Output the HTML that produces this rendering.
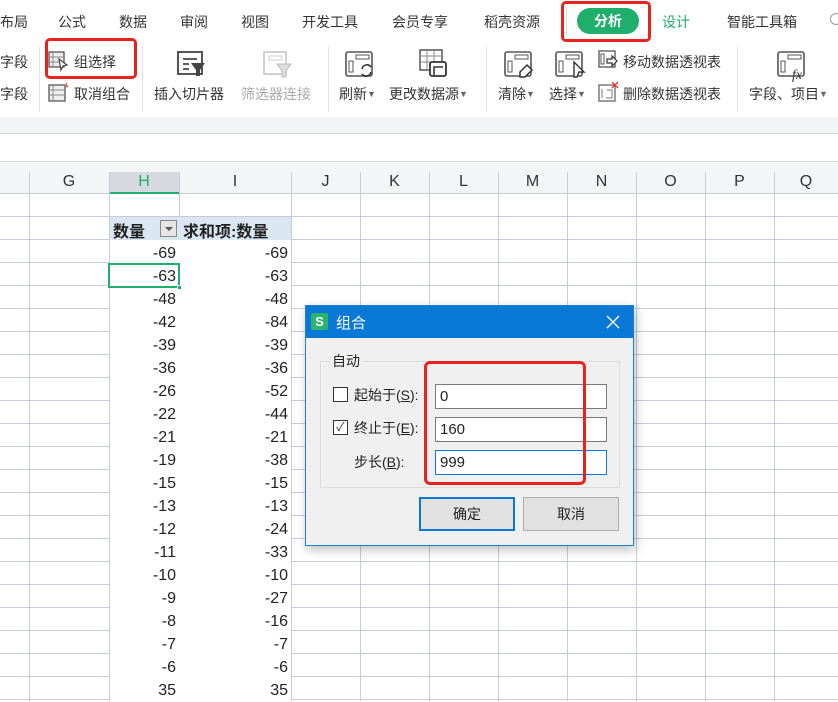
<!DOCTYPE html>
<html><head><meta charset="utf-8"><style>
*{margin:0;padding:0;box-sizing:border-box}
body{width:838px;height:701px;overflow:hidden;background:#fff;font-family:"Liberation Sans","Noto Sans CJK SC",sans-serif;position:relative;color:#222}
.a{position:absolute;white-space:nowrap}
.t{font-size:14px;top:12px;color:#333}
.r{font-size:14px;color:#333}
.sep{position:absolute;width:1px;background:#e4e5e7;top:46px;height:66px}
.hl{position:absolute;height:1px;background:#c8ccd6}
.vl{position:absolute;width:1px;background:#c8ccd6}
.hd{position:absolute;top:173px;font-size:16px;color:#333;text-align:center}
.n{position:absolute;font-size:16px;text-align:right;color:#222;height:23px;line-height:23px}
.caret{font-size:9px;color:#666;vertical-align:2px}
svg{position:absolute}
</style></head><body>
<!-- tabs -->
<div class="a t" style="left:0">布局</div>
<div class="a t" style="left:58px">公式</div>
<div class="a t" style="left:119px">数据</div>
<div class="a t" style="left:180px">审阅</div>
<div class="a t" style="left:241px">视图</div>
<div class="a t" style="left:302px">开发工具</div>
<div class="a t" style="left:392px">会员专享</div>
<div class="a t" style="left:484px">稻壳资源</div>
<div class="a" style="left:566px;top:8px;width:1px;height:26px;background:#ddd"></div>
<div class="a" style="left:577px;top:8px;width:62px;height:26px;border-radius:13px;background:#1fae6b;color:#fff;font-size:14px;font-weight:bold;text-align:center;line-height:26px">分析</div>
<div class="a" style="left:561px;top:1px;width:90px;height:41px;border:3px solid #e8231e;border-radius:5px"></div>
<div class="a t" style="left:662px;color:#1fae6b">设计</div>
<div class="a t" style="left:727px">智能工具箱</div>
<div class="a" style="left:830px;top:13px;width:12px;height:12px;border:1.5px solid #999;border-radius:50%"></div>

<!-- ribbon -->
<div class="a r" style="left:0;top:52px">字段</div>
<div class="a r" style="left:0;top:84px">字段</div>
<div class="sep" style="left:39px"></div>
<svg style="left:48px;top:50px" width="22" height="22" viewBox="0 0 22 22"><rect x="1" y="2" width="15" height="15" fill="#eee" stroke="#555" stroke-width="1.3"/><path d="M5 2v15M1 7h15M1 12h15" stroke="#888"/><path d="M11 9l8 6-4 1-2 4z" fill="#fff" stroke="#444" stroke-width="1.2"/></svg>
<div class="a r" style="left:74px;top:52px">组选择</div>
<svg style="left:48px;top:82px" width="22" height="22" viewBox="0 0 22 22"><rect x="1" y="3" width="16" height="16" fill="#eee" stroke="#555" stroke-width="1.3"/><path d="M5 3v16M1 8h16M1 13h16" stroke="#888"/><path d="M18 1l1 3M20 4l-2 1" stroke="#e33"/></svg>
<div class="a r" style="left:74px;top:84px">取消组合</div>
<div class="a" style="left:45px;top:38px;width:92px;height:41px;border:3px solid #e8231e;border-radius:5px"></div>
<div class="sep" style="left:142px"></div>
<svg style="left:176px;top:50px" width="32" height="30" viewBox="0 0 32 30"><rect x="2" y="2" width="24" height="22" fill="none" stroke="#444" stroke-width="1.8"/><path d="M7 9h14M7 14h6M7 19h6" stroke="#444" stroke-width="1.8"/><path d="M15 13h14l-5 7v6h-4v-6z" fill="#444"/></svg>
<div class="a r" style="left:154px;top:84px">插入切片器</div>
<svg style="left:262px;top:50px" width="32" height="30" viewBox="0 0 32 30"><rect x="2" y="2" width="22" height="22" fill="none" stroke="#ccc" stroke-width="1.8"/><rect x="7" y="6" width="13" height="4" fill="none" stroke="#ccc"/><path d="M15 14h14l-5 7v6h-4v-6z" fill="#ddd" stroke="#bbb"/></svg>
<div class="a r" style="left:241px;top:84px;color:#aaa">筛选器连接</div>
<div class="sep" style="left:328px"></div>
<svg style="left:344px;top:50px" width="32" height="30" viewBox="0 0 32 30"><rect x="2" y="2" width="26" height="24" rx="2" fill="none" stroke="#555" stroke-width="1.6"/><rect x="12" y="5" width="13" height="4" fill="none" stroke="#555"/><rect x="5" y="11" width="4" height="11" fill="none" stroke="#555"/><path d="M18 19a5 5 0 0 1 9-2M27 22a5 5 0 0 1-9 2" fill="none" stroke="#333" stroke-width="1.6"/></svg>
<div class="a r" style="left:339px;top:84px">刷新<span class="caret">▼</span></div>
<svg style="left:418px;top:48px" width="32" height="32" viewBox="0 0 32 32"><rect x="2" y="2" width="22" height="20" fill="none" stroke="#555" stroke-width="1.5"/><path d="M2 8h22M2 14h22M9 2v20M16 2v20" stroke="#888"/><rect x="12" y="14" width="16" height="14" rx="2" fill="#fff" stroke="#333" stroke-width="1.8"/><path d="M16 27v-8h9" fill="none" stroke="#333" stroke-width="1.6"/></svg>
<div class="a r" style="left:389px;top:84px">更改数据源<span class="caret">▼</span></div>
<div class="sep" style="left:486px"></div>
<svg style="left:503px;top:50px" width="34" height="30" viewBox="0 0 34 30"><rect x="2" y="2" width="26" height="24" rx="2" fill="none" stroke="#555" stroke-width="1.6"/><rect x="12" y="5" width="13" height="4" fill="none" stroke="#555"/><rect x="5" y="11" width="4" height="11" fill="none" stroke="#555"/><path d="M17 22l7-7 5 5-7 7h-5z" fill="#fff" stroke="#333" stroke-width="1.5"/></svg>
<div class="a r" style="left:498px;top:84px">清除<span class="caret">▼</span></div>
<svg style="left:554px;top:50px" width="34" height="30" viewBox="0 0 34 30"><rect x="2" y="2" width="26" height="24" rx="2" fill="none" stroke="#555" stroke-width="1.6"/><rect x="12" y="5" width="13" height="4" fill="none" stroke="#555"/><rect x="5" y="11" width="4" height="11" fill="none" stroke="#555"/><path d="M20 12l10 10h-5l-2 5h-3z" fill="#fff" stroke="#333" stroke-width="1.4"/></svg>
<div class="a r" style="left:549px;top:84px">选择<span class="caret">▼</span></div>
<svg style="left:598px;top:50px" width="22" height="20" viewBox="0 0 22 20"><rect x="1" y="1" width="16" height="16" fill="none" stroke="#555" stroke-width="1.3"/><rect x="3" y="4" width="3" height="10" fill="none" stroke="#555"/><path d="M9 9h5v-3l5 5-5 5v-3h-5z" fill="#fff" stroke="#333" stroke-width="1.2"/></svg>
<div class="a r" style="left:623px;top:52px">移动数据透视表</div>
<svg style="left:598px;top:81px" width="22" height="22" viewBox="0 0 22 22"><rect x="1" y="4" width="16" height="16" fill="none" stroke="#666" stroke-width="1.3"/><path d="M4 8v9M9 9h5v8h-6" fill="none" stroke="#777"/><path d="M14 1l6 6M20 1l-6 6" stroke="#e33" stroke-width="1.4"/></svg>
<div class="a r" style="left:623px;top:84px">删除数据透视表</div>
<div class="sep" style="left:737px"></div>
<svg style="left:776px;top:50px" width="34" height="32" viewBox="0 0 34 32"><rect x="2" y="2" width="26" height="24" rx="2" fill="none" stroke="#555" stroke-width="1.6"/><rect x="12" y="5" width="13" height="4" fill="none" stroke="#555"/><rect x="5" y="11" width="4" height="11" fill="none" stroke="#555"/><text x="16" y="29" font-size="14" font-style="italic" fill="#333" font-family="Liberation Serif">fx</text></svg>
<div class="a r" style="left:749px;top:84px">字段、项目<span class="caret">▼</span></div>

<!-- bands -->
<div class="a" style="left:0;top:117px;width:838px;height:17px;background:#f3f4f6;border-bottom:1px solid #d6d8de"></div>
<div class="a" style="left:0;top:161px;width:838px;height:33px;background:#f4f5f7;border-top:1px solid #d6d8de;border-bottom:1px solid #c8ccd6"></div>
<div class="a" style="left:110px;top:172px;width:69px;height:22px;background:#d6d9de;border-bottom:2px solid #1fae6b"></div>
<div class="vl" style="left:29px;top:172px;height:22px"></div>
<div class="vl" style="left:109px;top:172px;height:529px"></div>
<div class="vl" style="left:179px;top:172px;height:45px"></div>
<div class="vl" style="left:291px;top:172px;height:529px"></div>
<div class="vl" style="left:29px;top:194px;height:507px"></div>
<div class="vl" style="left:360px;top:172px;height:529px"></div>
<div class="vl" style="left:429px;top:172px;height:529px"></div>
<div class="vl" style="left:498px;top:172px;height:529px"></div>
<div class="vl" style="left:567px;top:172px;height:529px"></div>
<div class="vl" style="left:636px;top:172px;height:529px"></div>
<div class="vl" style="left:705px;top:172px;height:529px"></div>
<div class="vl" style="left:774px;top:172px;height:529px"></div>
<div class="hd" style="left:29px;width:80px">G</div>
<div class="hd" style="left:109px;width:70px;color:#1fae6b">H</div>
<div class="hd" style="left:179px;width:112px">I</div>
<div class="hd" style="left:291px;width:69px">J</div>
<div class="hd" style="left:360px;width:69px">K</div>
<div class="hd" style="left:429px;width:69px">L</div>
<div class="hd" style="left:498px;width:69px">M</div>
<div class="hd" style="left:567px;width:69px">N</div>
<div class="hd" style="left:636px;width:69px">O</div>
<div class="hd" style="left:705px;width:69px">P</div>
<div class="hd" style="left:774px;width:64px">Q</div>

<div style="position:absolute;left:0;top:194px;width:109px;height:507px;background:repeating-linear-gradient(to bottom,transparent 0,transparent 22px,#c8ccd6 22px,#c8ccd6 23px)"></div>
<div style="position:absolute;left:292px;top:194px;width:546px;height:507px;background:repeating-linear-gradient(to bottom,transparent 0,transparent 22px,#c8ccd6 22px,#c8ccd6 23px)"></div>
<div class="hl" style="left:109px;top:216px;width:182px"></div>
<div class="a" style="left:110px;top:217px;width:181px;height:23px;background:#dae7f3"></div>
<div class="a" style="left:113px;top:218px;font-size:16px;font-weight:bold;color:#222">数量</div>
<div class="a" style="left:160px;top:220px;width:17px;height:17px;background:#e5e5e5;border:1px solid #888"><div style="position:absolute;left:4px;top:6px;border:4px solid transparent;border-top:4px solid #555"></div></div>
<div class="a" style="left:183px;top:218px;font-size:16px;font-weight:bold;color:#222">求和项:数量</div>

<div class="n" style="left:110px;width:66px;top:242px">-69</div><div class="n" style="left:180px;width:108px;top:242px">-69</div>
<div class="n" style="left:110px;width:66px;top:265px">-63</div><div class="n" style="left:180px;width:108px;top:265px">-63</div>
<div class="n" style="left:110px;width:66px;top:288px">-48</div><div class="n" style="left:180px;width:108px;top:288px">-48</div>
<div class="n" style="left:110px;width:66px;top:311px">-42</div><div class="n" style="left:180px;width:108px;top:311px">-84</div>
<div class="n" style="left:110px;width:66px;top:334px">-39</div><div class="n" style="left:180px;width:108px;top:334px">-39</div>
<div class="n" style="left:110px;width:66px;top:357px">-36</div><div class="n" style="left:180px;width:108px;top:357px">-36</div>
<div class="n" style="left:110px;width:66px;top:380px">-26</div><div class="n" style="left:180px;width:108px;top:380px">-52</div>
<div class="n" style="left:110px;width:66px;top:403px">-22</div><div class="n" style="left:180px;width:108px;top:403px">-44</div>
<div class="n" style="left:110px;width:66px;top:426px">-21</div><div class="n" style="left:180px;width:108px;top:426px">-21</div>
<div class="n" style="left:110px;width:66px;top:449px">-19</div><div class="n" style="left:180px;width:108px;top:449px">-38</div>
<div class="n" style="left:110px;width:66px;top:472px">-15</div><div class="n" style="left:180px;width:108px;top:472px">-15</div>
<div class="n" style="left:110px;width:66px;top:495px">-13</div><div class="n" style="left:180px;width:108px;top:495px">-13</div>
<div class="n" style="left:110px;width:66px;top:518px">-12</div><div class="n" style="left:180px;width:108px;top:518px">-24</div>
<div class="n" style="left:110px;width:66px;top:541px">-11</div><div class="n" style="left:180px;width:108px;top:541px">-33</div>
<div class="n" style="left:110px;width:66px;top:564px">-10</div><div class="n" style="left:180px;width:108px;top:564px">-10</div>
<div class="n" style="left:110px;width:66px;top:587px">-9</div><div class="n" style="left:180px;width:108px;top:587px">-27</div>
<div class="n" style="left:110px;width:66px;top:610px">-8</div><div class="n" style="left:180px;width:108px;top:610px">-16</div>
<div class="n" style="left:110px;width:66px;top:633px">-7</div><div class="n" style="left:180px;width:108px;top:633px">-7</div>
<div class="n" style="left:110px;width:66px;top:656px">-6</div><div class="n" style="left:180px;width:108px;top:656px">-6</div>
<div class="n" style="left:110px;width:66px;top:679px">35</div><div class="n" style="left:180px;width:108px;top:679px">35</div>
<div class="a" style="left:108px;top:263px;width:72px;height:25px;border:2px solid #1fae6b"></div>
<div class="a" style="left:177px;top:285px;width:5px;height:5px;background:#1fae6b;border:1px solid #fff"></div>

<!-- dialog -->
<div class="a" style="left:305px;top:305px;width:329px;height:241px;background:#f0f0f0;border:1px solid #1c7fd6;box-shadow:2px 4px 10px rgba(0,0,0,.25)">
  <div style="position:absolute;left:0;top:0;width:327px;height:32px;background:#0a78d7"></div>
  <div style="position:absolute;left:5px;top:7px;width:17px;height:17px;background:#2bb46e;border-radius:2px;color:#fff;font-size:13px;font-weight:bold;text-align:center;line-height:17px">S</div>
  <div style="position:absolute;left:30px;top:6px;color:#fff;font-size:15px">组合</div>
  <svg style="left:300px;top:9px" width="14" height="14" viewBox="0 0 14 14"><path d="M1 1l12 12M13 1L1 13" stroke="#fff" stroke-width="1.3"/></svg>
  <div style="position:absolute;left:14px;top:55px;width:300px;height:127px;border:1px solid #dcdcdc"></div>
  <div style="position:absolute;left:24px;top:45px;font-size:14px;background:#f0f0f0;padding:0 2px">自动</div>
  <div style="position:absolute;left:27px;top:81px;width:15px;height:15px;border:1px solid #333;background:#fff"></div>
  <div style="position:absolute;left:48px;top:79px;font-size:14px">起始于(<u>S</u>):</div>
  <div style="position:absolute;left:27px;top:114px;width:15px;height:15px;border:1px solid #333;background:#fff;font-size:12px;line-height:13px;text-align:center;color:#333">✓</div>
  <div style="position:absolute;left:48px;top:112px;font-size:14px">终止于(<u>E</u>):</div>
  <div style="position:absolute;left:48px;top:146px;font-size:14px">步长(<u>B</u>):</div>
  <div style="position:absolute;left:129px;top:78px;width:172px;height:25px;border:1px solid #7a7a7a;background:#fff;font-size:15px;padding:3px 4px">0</div>
  <div style="position:absolute;left:129px;top:111px;width:172px;height:25px;border:1px solid #7a7a7a;background:#fff;font-size:15px;padding:3px 4px">160</div>
  <div style="position:absolute;left:129px;top:144px;width:172px;height:25px;border:1px solid #0a78d7;background:#fff;font-size:15px;padding:3px 4px">999</div>
  <div style="position:absolute;left:118px;top:55px;width:162px;height:124px;border:3px solid #e8231e;border-radius:6px"></div>
  <div style="position:absolute;left:113px;top:191px;width:96px;height:34px;border:2px solid #0a78d7;background:#e1e1e1;font-size:14px;text-align:center;line-height:30px">确定</div>
  <div style="position:absolute;left:217px;top:191px;width:96px;height:34px;border:1px solid #adadad;background:#e1e1e1;font-size:14px;text-align:center;line-height:32px">取消</div>
</div>
</body></html>
